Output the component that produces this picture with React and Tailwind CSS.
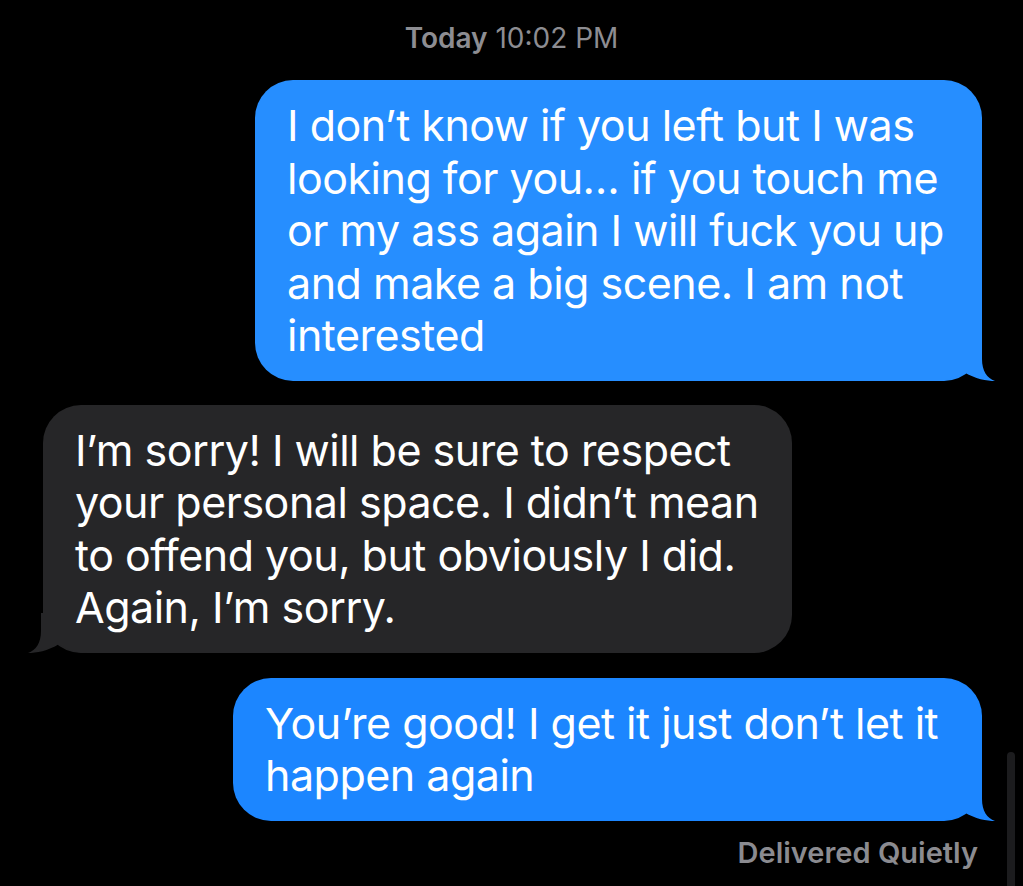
import React from 'react';

const font = { fontFamily: 'Inter, "Open Sans", "Liberation Sans", sans-serif' };

// iMessage tail, drawn over the bubble's bottom corner
function Tail({ side, color }) {
  const right = side === 'right';
  return (
    <svg
      width="60"
      height="40"
      viewBox="0 0 60 40"
      className={`absolute bottom-0 ${right ? 'right-[-13px]' : 'left-[-15px] -scale-x-100'}`}
    >
      <path
        d="M47 0 L47 18 C47 30 52 37 60 40 C52 40 40 38 29 31 C22 36 14 40 0 40 L0 0 Z"
        fill={color}
      />
    </svg>
  );
}

function Bubble({ side, color, width, lines }) {
  const right = side === 'right';
  return (
    <div className={`flex ${right ? 'justify-end pr-[41px]' : 'justify-start pl-[43px]'}`}>
      <div
        className="relative rounded-[38px] py-[19px] pl-[32px] text-white text-[43px] leading-[52.5px] tracking-[-0.5px]"
        style={{ backgroundColor: color, width }}
      >
        <Tail side={side} color={color} />
        <div className="relative">
          {lines.map((l, i) => (
            <div key={i} className="whitespace-nowrap">{l}</div>
          ))}
        </div>
      </div>
    </div>
  );
}

export default function App() {
  return (
    <div className="relative w-[1023px] h-[886px] bg-black overflow-hidden" style={font}>
      {/* Timestamp */}
      <div className="pt-[21px] text-center text-[28px] leading-[34px] text-[#8d8d92]">
        <span className="font-semibold">Today</span> 10:02 PM
      </div>

      <div className="mt-[25px] flex flex-col">
        <Bubble
          side="right"
          color="#268eff"
          width={727}
          lines={[
            'I don’t know if you left but I was',
            'looking for you… if you touch me',
            'or my ass again I will fuck you up',
            'and make a big scene. I am not',
            'interested',
          ]}
        />
        <div className="h-[24px]" />
        <Bubble
          side="left"
          color="#262628"
          width={749}
          lines={[
            'I’m sorry! I will be sure to respect',
            'your personal space. I didn’t mean',
            'to offend you, but obviously I did.',
            'Again, I’m sorry.',
          ]}
        />
        <div className="h-[25px]" />
        <Bubble
          side="right"
          color="#1c86ff"
          width={749}
          lines={['You’re good! I get it just don’t let it', 'happen again']}
        />
      </div>

      {/* Delivery status */}
      <div className="mt-[15px] pr-[45px] text-right text-[29px] leading-[34px] font-semibold text-[#8b8b90]">
        Delivered Quietly
      </div>

      {/* Scroll indicator */}
      <div className="absolute left-[1007px] top-[752px] w-[8px] h-[160px] rounded-full bg-[#1c1c1e]" />
    </div>
  );
}
